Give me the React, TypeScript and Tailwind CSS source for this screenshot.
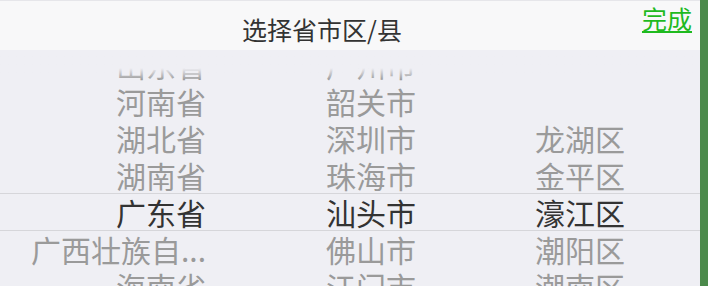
import React from 'react'

const provinces = ['山东省', '河南省', '湖北省', '湖南省', '广东省', '广西壮族自...', '海南省']
const cities = ['广州市', '韶关市', '深圳市', '珠海市', '汕头市', '佛山市', '江门市']
const districts = ['', '', '龙湖区', '金平区', '濠江区', '潮阳区', '潮南区']

const SELECTED = 4

function Column({ items, className }: { items: string[]; className: string }) {
  return (
    <div className={className}>
      {items.map((item, i) => (
        <div
          key={i}
          className={`h-[37px] leading-[37px] whitespace-nowrap ${
            i === SELECTED ? 'text-[#333333]' : 'text-[#9a9a9a]'
          }`}
        >
          {item}
        </div>
      ))}
    </div>
  )
}

export default function App() {
  return (
    <div
      className="flex h-[286px] w-[708px] overflow-hidden bg-[#4b8a4b]"
      style={{ fontFamily: '"Noto Sans CJK SC", "Noto Sans", sans-serif' }}
    >
      <div className="flex w-[700px] flex-col">
        <div className="flex h-[50px] shrink-0 border-t border-[#e6e6ea] bg-[#f8f8f9]">
          <div className="flex-1 pt-[13px] pl-[2px] text-center text-[25px] leading-[30px] text-[#333333]">
            选择省市区/县
          </div>
          <button
            type="button"
            className="self-start pr-[8px] pt-[2px] text-[25px] leading-[30px] text-[#1fba1f] underline underline-offset-2"
          >
            完成
          </button>
        </div>

        <div className="relative flex-1 overflow-hidden bg-[#efeff4]">
          <div className="-mt-[4px] flex text-[30px]">
            <Column items={provinces} className="w-[206px] text-right" />
            <Column items={cities} className="ml-[120px] w-[209px] text-left" />
            <Column items={districts} className="flex-1 text-left" />
          </div>

          <div className="pointer-events-none absolute inset-x-0 top-[143px] h-[38px] border-y border-[#d6d6da]" />
          <div className="pointer-events-none absolute inset-x-0 top-0 h-[30px] bg-gradient-to-b from-[#efeff4] from-60% to-[#efeff4]/0" />
        </div>
      </div>
    </div>
  )
}
